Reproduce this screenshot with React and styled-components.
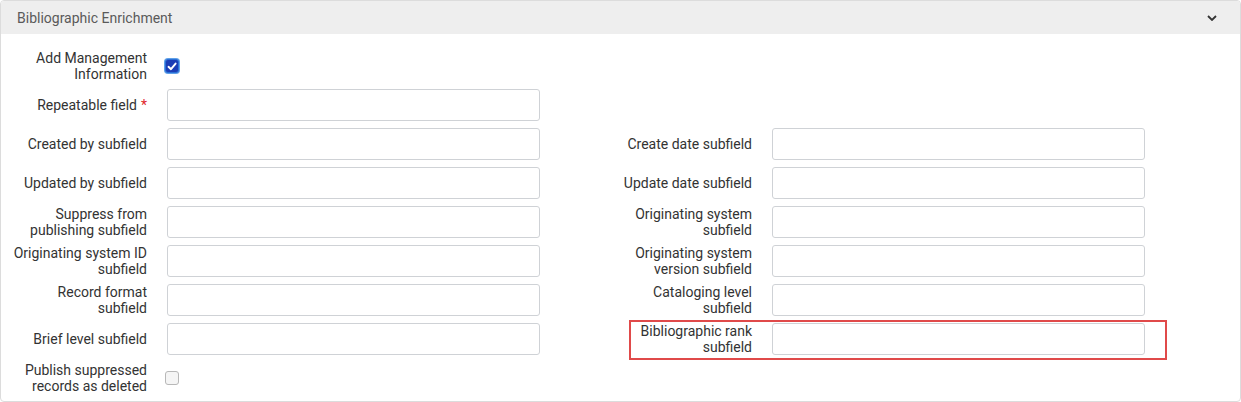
import React from 'react'
import styled, { createGlobalStyle } from 'styled-components'

const GlobalStyle = createGlobalStyle`
  body {
    margin: 0;
    background: #ffffff;
    font-family: Roboto, 'Liberation Sans', sans-serif;
  }
`

const Panel = styled.section`
  width: 1241px;
  height: 402px;
  box-sizing: border-box;
  border: 1px solid #dcdcdc;
  border-radius: 4px;
  background: #fff;
  overflow: hidden;
`

const Header = styled.header`
  display: flex;
  align-items: center;
  justify-content: space-between;
  height: 33px;
  padding: 0 16px 0 16px;
  background: #eeeeee;
  color: #5a5a5a;
  font-size: 14px;
`

const Chevron = styled.svg`
  width: 10px;
  height: 6px;
  margin-right: 7px;
  margin-top: 1px;
`

const Body = styled.div`
  display: grid;
  grid-template-columns: 605px 605px;
  row-gap: 7px;
  padding: 16px 0 7px 0;
`

const Row = styled.div`
  grid-column: ${p => p.$col};
  display: flex;
  align-items: center;
  height: 32px;
  position: relative;
`

const Label = styled.label`
  width: 140px;
  margin-left: 6px;
  margin-right: 18px;
  text-align: right;
  font-size: 14px;
  line-height: 16px;
  color: #333333;
`

const Required = styled.span`
  color: #e0262b;
  margin-left: 4px;
`

const Input = styled.input`
  box-sizing: border-box;
  width: 373px;
  height: 32px;
  margin-left: 2px;
  border: 1px solid #cfd2d6;
  border-radius: 3px;
  background: #fff;
  outline: none;
`

const Check = styled.span`
  box-sizing: border-box;
  width: 14px;
  height: 14px;
  border-radius: 3px;
  display: flex;
  align-items: center;
  justify-content: center;
  background: ${p => (p.$checked ? '#1b3db5' : '#f5f5f5')};
  border: 1px solid ${p => (p.$checked ? '#2a6fd6' : '#b8b8b8')};
  box-shadow: ${p => (p.$checked ? '0 0 0 1px #5fa0e8' : 'none')};
`

const Highlight = styled.div`
  position: absolute;
  left: 23px;
  top: -3px;
  width: 538px;
  height: 40px;
  box-sizing: border-box;
  border: 2px solid #e04a4a;
  pointer-events: none;
`

const Field = ({ col, label, required, highlight }) => (
  <Row $col={col}>
    <Label>
      {label}
      {required && <Required>*</Required>}
    </Label>
    <Input type="text" />
    {highlight && <Highlight />}
  </Row>
)

const CheckField = ({ col, label, checked }) => (
  <Row $col={col}>
    <Label>{label}</Label>
    <Check $checked={checked}>
      {checked && (
        <svg width="10" height="9" viewBox="0 0 10 9">
          <path d="M1.5 4.8 L4 7.2 L8.6 1.6" fill="none" stroke="#fff" strokeWidth="1.9" strokeLinecap="round" strokeLinejoin="round" />
        </svg>
      )}
    </Check>
  </Row>
)

const App = () => (
  <>
    <GlobalStyle />
    <Panel>
      <Header>
        <span>Bibliographic Enrichment</span>
        <Chevron viewBox="0 0 10 6">
          <path d="M1 1 L5 5 L9 1" fill="none" stroke="#333" strokeWidth="1.8" />
        </Chevron>
      </Header>
      <Body>
        <CheckField col={1} label="Add Management Information" checked />
        <Field col={1} label="Repeatable field" required />
        <Field col={1} label="Created by subfield" />
        <Field col={2} label="Create date subfield" />
        <Field col={1} label="Updated by subfield" />
        <Field col={2} label="Update date subfield" />
        <Field col={1} label="Suppress from publishing subfield" />
        <Field col={2} label="Originating system subfield" />
        <Field col={1} label="Originating system ID subfield" />
        <Field col={2} label="Originating system version subfield" />
        <Field col={1} label="Record format subfield" />
        <Field col={2} label="Cataloging level subfield" />
        <Field col={1} label="Brief level subfield" />
        <Field col={2} label="Bibliographic rank subfield" highlight />
        <CheckField col={1} label="Publish suppressed records as deleted" />
      </Body>
    </Panel>
  </>
)

export default App
